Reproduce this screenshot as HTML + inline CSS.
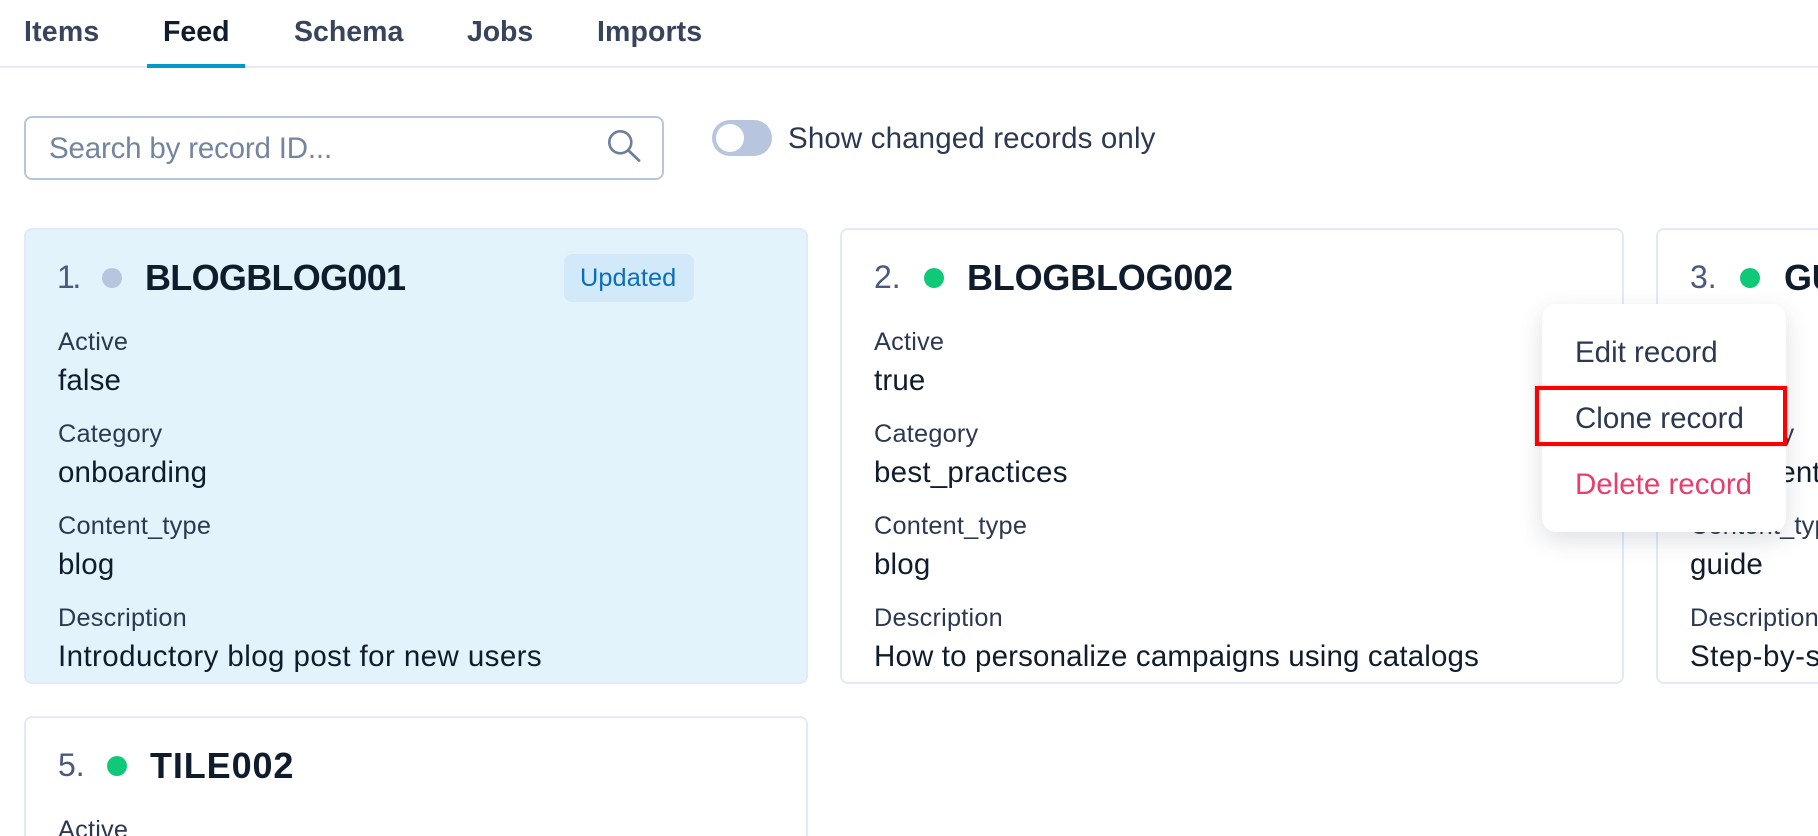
<!DOCTYPE html>
<html>
<head>
<meta charset="utf-8">
<style>
html,body{margin:0;padding:0;background:#fff;width:1818px;height:836px;overflow:hidden;}
#f{position:absolute;left:0;top:0;width:1818px;height:836px;overflow:hidden;background:#fff;font-family:"Liberation Sans",sans-serif;color:#0f1c2b;}
.a{position:absolute;white-space:nowrap;}
.tab{top:12px;line-height:40px;font-size:28.5px;font-weight:bold;color:#38445c;letter-spacing:0;}
.card{position:absolute;box-sizing:border-box;width:784px;height:456px;top:228px;border:2px solid #e2eafa;border-radius:8px;background:#fff;overflow:hidden;}
.n{position:absolute;white-space:nowrap;left:32px;top:27px;font-size:32px;line-height:40px;color:#4a5a7c;}
.d{position:absolute;top:38px;width:20px;height:20px;border-radius:50%;background:#10c978;}
.h{position:absolute;white-space:nowrap;top:26px;font-size:36px;line-height:44px;font-weight:bold;color:#0f1c2b;letter-spacing:-.2px;}
.l{position:absolute;white-space:nowrap;left:32px;font-size:25.3px;line-height:32px;color:#2c3850;letter-spacing:.22px;margin-top:1px;}
.v{position:absolute;white-space:nowrap;left:32px;font-size:29.5px;line-height:40px;color:#0f1c2b;margin-top:2px;letter-spacing:.15px;}
.m{position:absolute;white-space:nowrap;left:1575px;font-size:29.5px;line-height:40px;color:#2c3850;margin-top:1px;}
</style>
</head>
<body>
<div id="f">
<div class="a tab" style="left:24px;letter-spacing:.2px">Items</div>
<div class="a tab" style="left:163px;color:#0f1c2b">Feed</div>
<div class="a tab" style="left:294px">Schema</div>
<div class="a tab" style="left:467px;letter-spacing:-.1px">Jobs</div>
<div class="a tab" style="left:597px;letter-spacing:.1px">Imports</div>
<div class="a" style="left:0;top:66px;width:1818px;height:2px;background:#e2eafa"></div>
<div class="a" style="left:147px;top:64px;width:98px;height:4px;background:#0099cc"></div>

<div class="a" style="box-sizing:border-box;left:24px;top:116px;width:640px;height:64px;border:2px solid #b8c5de;border-radius:8px;background:#fff"></div>
<div class="a" style="left:49px;top:129px;font-size:29.5px;line-height:40px;color:#74859f;letter-spacing:-.18px">Search by record ID...</div>
<svg class="a" style="left:600px;top:125px" width="44" height="40" viewBox="600 125 44 40"><circle cx="620.3" cy="142.3" r="11" fill="none" stroke="#6e7f9c" stroke-width="2.6"/><path d="M628.5 150.5L639 160.5" fill="none" stroke="#6e7f9c" stroke-width="2.8" stroke-linecap="round"/></svg>

<div class="a" style="left:712px;top:120px;width:60px;height:36px;border-radius:18px;background:#b8c5de"></div>
<div class="a" style="left:716px;top:124px;width:28px;height:28px;border-radius:50%;background:#fff"></div>
<div class="a" style="left:788px;top:119px;font-size:29.5px;line-height:40px;color:#2c3850;letter-spacing:.14px">Show changed records only</div>

<div class="card" style="left:24px;background:#e3f3fc">
  <div class="n" style="letter-spacing:-2.4px;left:31px">1.</div>
  <div class="d" style="left:76px;background:#b8c5de"></div>
  <div class="h" style="left:119px;letter-spacing:-.7px">BLOGBLOG001</div>
  <div class="a" style="left:538px;top:24px;width:130px;height:48px;border-radius:8px;background:#d2e9fa"></div>
  <div class="a" style="left:554px;top:32px;font-size:25.3px;line-height:32px;color:#0b6fb8;letter-spacing:.1px">Updated</div>
  <div class="l" style="top:95px">Active</div><div class="v" style="top:129px">false</div>
  <div class="l" style="top:187px">Category</div><div class="v" style="top:221px">onboarding</div>
  <div class="l" style="top:279px">Content_type</div><div class="v" style="top:313px">blog</div>
  <div class="l" style="top:371px">Description</div><div class="v" style="top:405px;letter-spacing:.42px">Introductory blog post for new users</div>
</div>

<div class="card" style="left:840px">
  <div class="n">2.</div>
  <div class="d" style="left:82px"></div>
  <div class="h" style="left:125px">BLOGBLOG002</div>
  <div class="l" style="top:95px">Active</div><div class="v" style="top:129px">true</div>
  <div class="l" style="top:187px">Category</div><div class="v" style="top:221px;letter-spacing:.25px">best_practices</div>
  <div class="l" style="top:279px">Content_type</div><div class="v" style="top:313px">blog</div>
  <div class="l" style="top:371px">Description</div><div class="v" style="top:405px">How to personalize campaigns using catalogs</div>
</div>

<div class="card" style="left:1656px;width:162px;border-right:none;border-radius:8px 0 0 8px">
  <div class="n">3.</div>
  <div class="d" style="left:82px"></div>
  <div class="h" style="left:126px">GUIDEGUIDE001</div>
  <div class="l" style="top:95px">Active</div><div class="v" style="top:129px">true</div>
  <div class="l" style="top:187px">Category</div><div class="v" style="top:221px">documentation</div>
  <div class="l" style="top:279px">Content_type</div><div class="v" style="top:313px">guide</div>
  <div class="l" style="top:371px">Description</div><div class="v" style="top:405px;letter-spacing:.5px">Step-by-step guide to catalogs</div>
</div>

<div class="card" style="left:24px;top:716px;height:120px;border-bottom:none;border-radius:8px 8px 0 0">
  <div class="n">5.</div>
  <div class="d" style="left:81px"></div>
  <div class="h" style="left:124px;letter-spacing:.9px">TILE002</div>
  <div class="l" style="top:95px">Active</div>
</div>

<div class="a" style="left:1542px;top:304px;width:244px;height:228px;border-radius:14px;background:#fff;box-shadow:0 8px 24px rgba(40,60,90,.16)"></div>
<div class="m" style="top:332px">Edit record</div>
<div class="m" style="top:398px">Clone record</div>
<div class="m" style="top:464px;color:#e83e6c">Delete record</div>
<div class="a" style="box-sizing:border-box;left:1535px;top:386px;width:252px;height:60px;border:4px solid #f00;box-shadow:0 0 3px rgba(0,0,0,.2)"></div>
</div>
</body>
</html>
